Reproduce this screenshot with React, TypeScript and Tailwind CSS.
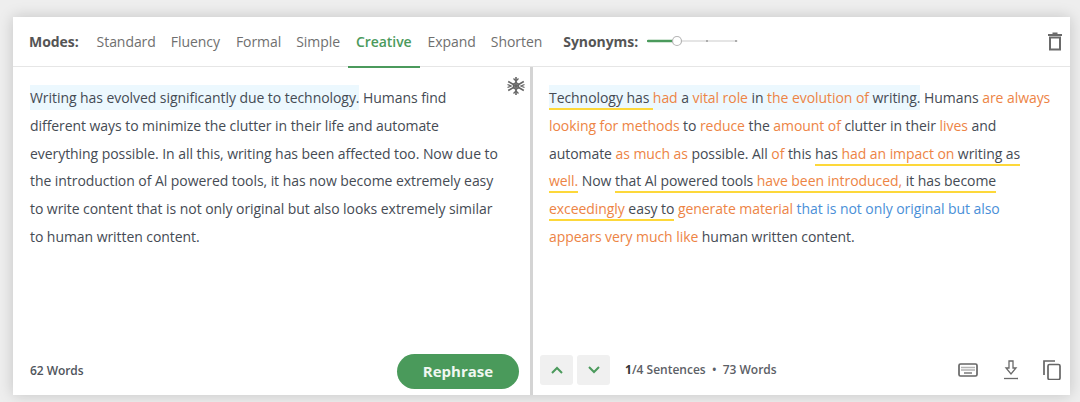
import React from "react";

const O = ({ children }: { children: React.ReactNode }) => <span className="text-[#ed8445]">{children}</span>;
const U = ({ children }: { children: React.ReactNode }) => (
  <span className="border-b-2 border-[#fdd83a] pb-[1px]">{children}</span>
);

function Snow() {
  return (
    <svg width="20" height="20" viewBox="0 0 20 20" fill="none" stroke="#666" strokeWidth="1.6">
      <path d="M10 1v18M2.200 5.500l15.600 9M17.800 5.500l-15.600 9" />
      <path d="M7.500 2.500L10 5l2.500-2.500M7.500 17.500L10 15l2.500 2.500M1.500 8.500L5 10l-3.500 1.500M18.500 8.500L15 10l3.500 1.500M7.500 8l2.500-1.500L12.500 8v4L10 13.500 7.500 12z" strokeWidth="1.300" />
    </svg>
  );
}

export default function App() {
  return (
    <div className="h-[402px] w-[1080px] overflow-hidden bg-[#eeeeee] pl-[13px] pt-[17px] font-['Open_Sans',sans-serif] tracking-[-0.06px]">
      <div className="flex h-[378px] w-[1057px] flex-col bg-white shadow-[0_0_14px_rgba(0,0,0,0.18)]">
        <div className="flex h-[50px] shrink-0 items-center border-b border-[#e6e6e6] pl-[16px] pr-[7px] text-[14px] text-[#6f6f6f]">
          <span className="mr-[18px] font-bold text-[#555]">Modes:</span>
          <span className="mr-[15px]">Standard</span>
          <span className="mr-[16px]">Fluency</span>
          <span className="mr-[15px]">Formal</span>
          <span className="mr-[16px]">Simple</span>
          <span className="relative mr-[16px] font-semibold text-[#4b9a5c]">
            Creative
            <span className="absolute -bottom-[16px] -left-[8px] -right-[8px] h-[2px] bg-[#4b9a5c]" />
          </span>
          <span className="mr-[15px]">Expand</span>
          <span className="mr-[21px]">Shorten</span>
          <span className="mr-[9px] font-bold text-[#555]">Synonyms:</span>
          <svg width="92" height="14" viewBox="0 0 92 14" className="mt-[-1px]">
            <path d="M1 7h89" stroke="#dddddd" strokeWidth="1.500" strokeLinecap="round" />
            <path d="M1 7h28" stroke="#4b9a5c" strokeWidth="2.500" strokeLinecap="round" />
            <circle cx="60" cy="7" r="1" fill="#999" />
            <circle cx="89" cy="7" r="1" fill="#999" />
            <circle cx="30" cy="7" r="4.500" fill="#fff" stroke="#b5b5b5" strokeWidth="1.200" />
          </svg>
          <svg width="16" height="20" viewBox="0 0 16 20" className="ml-auto" fill="none" stroke="#6a6a6a">
            <path d="M3 5.500h10V17.500H3z" strokeWidth="2" />
            <path d="M1 3h14M5.500 1.500h5" strokeWidth="2" />
          </svg>
        </div>
        <div className="flex min-h-0 flex-1">
          <div className="relative flex w-[520px] shrink-0 flex-col border-r-[3px] border-[#d4d4d4]">
            <div className="absolute right-[4px] top-[9px]"><Snow /></div>
            <p className="ml-[17px] mt-[17px] w-[472px] text-[14px] leading-[27.8px] text-[#454b54]">
              <span className="bg-[#ecf8fe] py-[3px]">Writing has evolved significantly due to technology.</span> Humans find different ways to minimize the clutter in their life and automate everything possible. In all this, writing has been affected too. Now due to the introduction of Al powered tools, it has now become extremely easy to write content that is not only original but also looks extremely similar to human written content.
            </p>
            <div className="mt-auto flex items-center justify-between pb-[6px] pl-[17px] pr-[11px]">
              <span className="pb-[2px] text-[12px] font-semibold text-[#50555c]">62 Words</span>
              <button className="flex h-[35px] w-[122px] items-center justify-center rounded-full bg-[#4a9a5b] text-[15px] font-bold tracking-normal text-[#f0f7f1]">
                Rephrase
              </button>
            </div>
          </div>
          <div className="flex min-w-0 flex-1 flex-col">
            <p className="ml-[16px] mt-[17px] w-[510px] text-[14px] leading-[27.8px] text-[#454b54]">
              <span className="bg-[#ecf8fe] py-[3px]">
                <U>Technology has </U><O>had</O> a <O>vital role</O> in <O>the evolution of</O> writing.
              </span>{" "}
              Humans <O>are always looking for methods</O> to <O>reduce</O> the <O>amount of</O> clutter in their <O>lives</O> and<br />automate <O>as much as</O> possible. All <O>of</O> this <U>has <O>had an impact on</O> writing as</U><br /><U><O>well.</O></U> Now <U>that Al powered tools <O>have been introduced,</O> it has become</U><br /><U><O>exceedingly</O> easy to</U> <O>generate material</O> <span className="text-[#4a8fd8]">that is not only original but also</span><br /><O>appears very much like</O> human written content.
            </p>
            <div className="mt-auto flex h-[51px] items-center pl-[7px] pr-[9px]">
              <button className="flex h-[30px] w-[33px] items-center justify-center rounded-[3px] bg-[#f0f0f0]">
                <svg width="12" height="8" viewBox="0 0 12 8" fill="none" stroke="#4b9a5c" strokeWidth="2"><path d="M1 7l5-5 5 5" /></svg>
              </button>
              <button className="ml-[4px] flex h-[30px] w-[33px] items-center justify-center rounded-[3px] bg-[#f0f0f0]">
                <svg width="12" height="8" viewBox="0 0 12 8" fill="none" stroke="#4b9a5c" strokeWidth="2"><path d="M1 1l5 5 5-5" /></svg>
              </button>
              <span className="ml-[15px] text-[12px] font-semibold tracking-normal text-[#5c6066]">
                <span className="font-bold text-[#333]">1</span>/4 Sentences&nbsp; •&nbsp; 73 Words
              </span>
              <svg width="20" height="14" viewBox="0 0 20 14" className="ml-auto" fill="none" stroke="#666">
                <rect x="1" y="1" width="18" height="12" rx="1.500" strokeWidth="1.700" />
                <path d="M3.500 4.500h13M3.500 7h13" strokeWidth="1.400" strokeDasharray="1 1" />
                <path d="M6 10h8" strokeWidth="1.300" />
              </svg>
              <svg width="16" height="20" viewBox="0 0 16 20" className="ml-[25px]" fill="none" stroke="#6a6a6a" strokeWidth="1.300">
                <path d="M6 1h4v7h3l-5 6-5-6h3z" />
                <path d="M1 18.500h14" />
              </svg>
              <svg width="18" height="20" viewBox="0 0 18 20" className="ml-[24px]" fill="none" stroke="#666" strokeWidth="1.700">
                <path d="M1 15V1h11" />
                <rect x="5" y="4.500" width="12" height="15" rx="1.500" />
              </svg>
            </div>
          </div>
        </div>
      </div>
    </div>
  );
}
